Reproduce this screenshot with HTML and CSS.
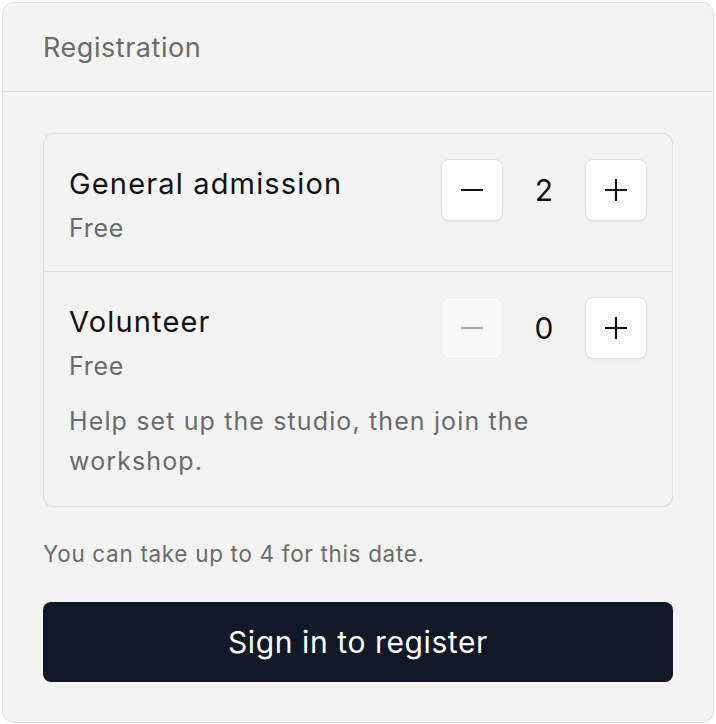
FILE: index.html
```html
<!DOCTYPE html>
<html lang="en">
<head>
<meta charset="utf-8">
<title>Registration</title>
<link rel="stylesheet" href="styles.css">
</head>
<body>
<section class="card">
  <header class="card-header">Registration</header>
  <div class="card-body">
    <div class="tickets">
      <div class="ticket">
        <div class="ticket-top">
          <div class="ticket-info">
            <div class="ticket-name">General admission</div>
            <div class="ticket-price">Free</div>
          </div>
          <div class="stepper">
            <button class="step-btn" type="button" aria-label="Decrease">
              <svg viewBox="0 0 24 24" width="24" height="24"><path d="M1 12h22" stroke="currentColor" stroke-width="2.2" fill="none"/></svg>
            </button>
            <span class="step-value">2</span>
            <button class="step-btn" type="button" aria-label="Increase">
              <svg viewBox="0 0 24 24" width="24" height="24"><path d="M1 12h22M12 1v22" stroke="currentColor" stroke-width="2.2" fill="none"/></svg>
            </button>
          </div>
        </div>
      </div>
      <div class="ticket">
        <div class="ticket-top">
          <div class="ticket-info">
            <div class="ticket-name">Volunteer</div>
            <div class="ticket-price">Free</div>
          </div>
          <div class="stepper">
            <button class="step-btn is-disabled" type="button" aria-label="Decrease" disabled>
              <svg viewBox="0 0 24 24" width="24" height="24"><path d="M1 12h22" stroke="currentColor" stroke-width="2.2" fill="none"/></svg>
            </button>
            <span class="step-value">0</span>
            <button class="step-btn" type="button" aria-label="Increase">
              <svg viewBox="0 0 24 24" width="24" height="24"><path d="M1 12h22M12 1v22" stroke="currentColor" stroke-width="2.2" fill="none"/></svg>
            </button>
          </div>
        </div>
        <p class="ticket-desc">Help set up the studio, then join the workshop.</p>
      </div>
    </div>
    <p class="note">You can take up to 4 for this date.</p>
    <button class="primary-btn" type="button">Sign in to register</button>
  </div>
</section>
</body>
</html>
```

FILE: styles.css
```css
* {
  box-sizing: border-box;
}

html, body {
  margin: 0;
  padding: 0;
  background: #ffffff;
}

body {
  font-family: Inter, "Liberation Sans", Arial, sans-serif;
  padding: 2px;
}

.card {
  width: 712px;
  background: #f3f3f3;
  border: 1px solid #e0e0e0;
  border-radius: 12px;
  overflow: hidden;
}

.card-header {
  height: 89px;
  display: flex;
  align-items: center;
  padding: 0 40px;
  border-bottom: 1px solid #e0e0e0;
  font-size: 27px;
  letter-spacing: 0.02em;
  color: #6b6b6b;
}

.card-body {
  padding: 41px 40px 40px;
}

.tickets {
  border: 1px solid #e0e0e0;
  border-radius: 10px;
}

.ticket {
  padding: 25px;
}

.ticket + .ticket {
  border-top: 1px solid #e0e0e0;
}

.ticket-top {
  display: flex;
  justify-content: space-between;
  align-items: flex-start;
}

.ticket-info {
  padding-top: 4px;
}

.ticket-name {
  font-size: 29px;
  line-height: 42px;
  letter-spacing: 0.04em;
  color: #111111;
}

.ticket-price {
  margin-top: 5px;
  font-size: 25px;
  line-height: 36px;
  letter-spacing: 0.03em;
  color: #6b6b6b;
}

.ticket-desc {
  margin: 17px 0 0;
  font-size: 25px;
  line-height: 40px;
  letter-spacing: 0.045em;
  color: #6b6b6b;
}

.stepper {
  display: flex;
  align-items: center;
}

.step-btn {
  width: 62px;
  height: 62px;
  display: flex;
  align-items: center;
  justify-content: center;
  padding: 0;
  background: #ffffff;
  border: 1px solid #e2e2e2;
  border-radius: 8px;
  box-shadow: 0 1px 2px rgba(0, 0, 0, 0.05);
  color: #111111;
}

.step-btn.is-disabled {
  background: #f8f8f8;
  color: #a8a8a8;
  box-shadow: none;
  border-color: #ececec;
}

.step-value {
  width: 82px;
  text-align: center;
  font-size: 30px;
  color: #111111;
}

.note {
  margin: 31px 0 0;
  font-size: 22.5px;
  line-height: 32px;
  letter-spacing: 0.03em;
  color: #6b6b6b;
}

.primary-btn {
  display: flex;
  align-items: center;
  justify-content: center;
  width: 100%;
  height: 80px;
  margin-top: 32px;
  border: none;
  border-radius: 8px;
  background: #111827;
  color: #ffffff;
  font-family: inherit;
  font-size: 30px;
  letter-spacing: 0.02em;
}
```
